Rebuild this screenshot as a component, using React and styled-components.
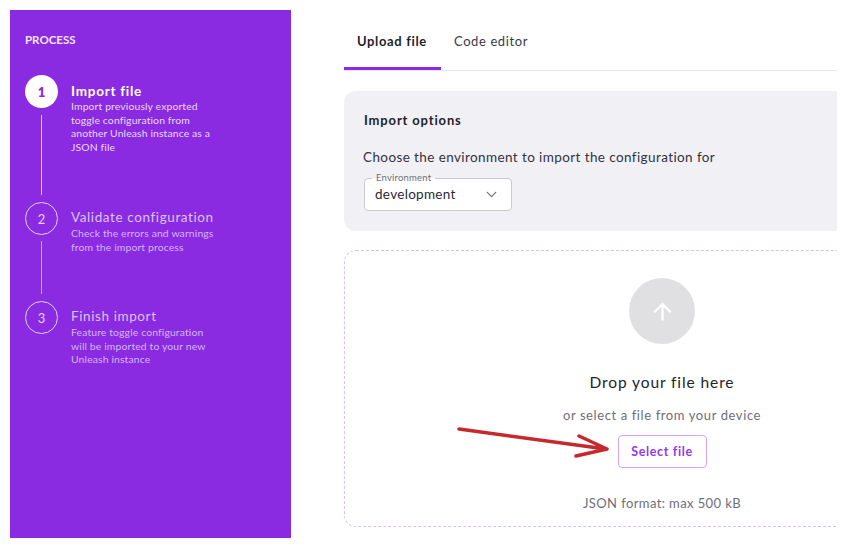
import React from 'react'
import styled, { createGlobalStyle } from 'styled-components'
import { ChevronDown } from 'lucide-react'

const steps = [
  {
    num: 1,
    title: 'Import file',
    text: ['Import previously exported', 'toggle configuration from', 'another Unleash instance as a', 'JSON file'],
    line: 80,
    height: 127,
    active: true,
  },
  {
    num: 2,
    title: 'Validate configuration',
    text: ['Check the errors and warnings', 'from the import process'],
    line: 53,
    height: 99,
  },
  {
    num: 3,
    title: 'Finish import',
    text: ['Feature toggle configuration', 'will be imported to your new', 'Unleash instance'],
  },
]

const App = () => {
  return (
    <>
      <GlobalStyle />
      <Page>
        <Sidebar>
          <SideTitle>PROCESS</SideTitle>
          <StepList>
            {steps.map((s) => (
              <Step key={s.num} $height={s.height}>
                <StepMarker>
                  <StepCircle $active={s.active}>{s.num}</StepCircle>
                  {s.line && <StepLine $height={s.line} $active={s.active} />}
                </StepMarker>
                <StepBody>
                  <StepTitle $active={s.active}>{s.title}</StepTitle>
                  <StepText $active={s.active}>
                    {s.text.map((t) => (
                      <span key={t}>{t}</span>
                    ))}
                  </StepText>
                </StepBody>
              </Step>
            ))}
          </StepList>
        </Sidebar>
        <Main>
          <Tabs>
            <Tab $active>Upload file</Tab>
            <Tab>Code editor</Tab>
          </Tabs>
          <Options>
            <OptionsTitle>Import options</OptionsTitle>
            <OptionsText>Choose the environment to import the configuration for</OptionsText>
            <SelectBox>
              <SelectLabel>Environment</SelectLabel>
              <span>development</span>
              <ChevronDown size={17} strokeWidth={1.7} color="#6e6e78" />
            </SelectBox>
          </Options>
          <DropZone>
            <UploadCircle>
              <svg width="27" height="27" viewBox="0 0 24 24" fill="#fff">
                <path d="M4 12l1.41 1.41L11 7.83V20h2V7.83l5.58 5.59L20 12l-8-8-8 8z" />
              </svg>
            </UploadCircle>
            <DropTitle>Drop your file here</DropTitle>
            <DropHint>or select a file from your device</DropHint>
            <SelectButton>Select file</SelectButton>
            <DropFormat>JSON format: max 500 kB</DropFormat>
          </DropZone>
        </Main>
        <Pointer width="160" height="40" viewBox="0 0 160 40" fill="none">
          <path
            d="M2 3 L149 23 M122 10 L150 23 L119 30"
            stroke="#c5282d"
            strokeWidth="3.5"
            strokeLinecap="round"
            strokeLinejoin="round"
          />
        </Pointer>
      </Page>
    </>
  )
}

const GlobalStyle = createGlobalStyle`
  html, body {
    margin: 0;
    padding: 0;
    background: #fff;
  }
  body {
    font-family: "Lato", "Open Sans", sans-serif;
  }
`
const Page = styled.div`
  position: relative;
  width: 847px;
  height: 548px;
  box-sizing: border-box;
  padding: 10px;
  display: flex;
  gap: 53px;
  overflow: hidden;
`
const Sidebar = styled.div`
  width: 281px;
  height: 528px;
  flex-shrink: 0;
  box-sizing: border-box;
  padding: 23px 15px;
  background: #8a2be2;
  color: #fff;
`
const SideTitle = styled.div`
  font-size: 11.5px;
  line-height: 14px;
  font-weight: 700;
  color: #f1e6fc;
  margin-bottom: 28px;
`
const StepList = styled.div`
  display: flex;
  flex-direction: column;
`
const Step = styled.div`
  display: flex;
  gap: 13px;
  height: ${(p) => (p.$height ? `${p.$height}px` : 'auto')};
`
const StepMarker = styled.div`
  width: 33px;
  flex-shrink: 0;
  display: flex;
  flex-direction: column;
  align-items: center;
`
const StepCircle = styled.div`
  width: 33px;
  height: 33px;
  box-sizing: border-box;
  border-radius: 50%;
  display: flex;
  align-items: center;
  justify-content: center;
  font-size: 13px;
  font-weight: ${(p) => (p.$active ? 800 : 400)};
  background: ${(p) => (p.$active ? '#fff' : 'transparent')};
  color: ${(p) => (p.$active ? '#8a2be2' : '#e4d0f9')};
  border: ${(p) => (p.$active ? 'none' : '1px solid #e4d0f9')};
`
const StepLine = styled.div`
  width: 1px;
  height: ${(p) => p.$height}px;
  margin-top: ${(p) => (p.$active ? 7 : 6)}px;
  background: ${(p) => (p.$active ? '#dcc3f7' : '#c9a0f2')};
`
const StepBody = styled.div`
  padding-top: 7.5px;
  min-width: 0;
`
const StepTitle = styled.div`
  font-size: 13.5px;
  line-height: 16px;
  margin: ${(p) => (p.$active ? '0' : '-1px 0 2.5px')};
  letter-spacing: ${(p) => (p.$active ? 0.75 : 0.6)}px;
  font-weight: ${(p) => (p.$active ? 700 : 400)};
  color: ${(p) => (p.$active ? '#fff' : '#dbc2f8')};
`
const StepText = styled.div`
  display: flex;
  flex-direction: column;
  margin-top: 1.5px;
  font-size: 10.4px;
  line-height: 13.7px;
  letter-spacing: 0.13px;
  color: ${(p) => (p.$active ? '#ead9fc' : '#d5b6f6')};
`
const Main = styled.div`
  width: 493px;
  height: 528px;
  flex-shrink: 0;
  overflow: hidden;
`
const Tabs = styled.div`
  display: flex;
  height: 60px;
  box-sizing: content-box;
  border-bottom: 1px solid #e6e6ec;
`
const Tab = styled.div`
  box-sizing: border-box;
  height: 60px;
  padding: 23px 13px 0;
  min-width: 97px;
  font-size: 13px;
  line-height: 16px;
  letter-spacing: ${(p) => (p.$active ? 0.65 : 0.6)}px;
  font-weight: ${(p) => (p.$active ? 700 : 400)};
  color: ${(p) => (p.$active ? '#1f1f2b' : '#3a3a46')};
  border-bottom: 3px solid ${(p) => (p.$active ? '#8a2be2' : 'transparent')};
`
const Options = styled.div`
  width: 636px;
  height: 140px;
  box-sizing: border-box;
  margin-top: 20px;
  padding: 20px 20px;
  background: #f0f0f5;
  border-radius: 12px;
`
const OptionsTitle = styled.div`
  font-size: 13px;
  line-height: 18px;
  font-weight: 700;
  letter-spacing: 0.85px;
  color: #1f1f2b;
`
const OptionsText = styled.div`
  margin-top: 19px;
  margin-left: -1px;
  font-size: 13.5px;
  line-height: 18px;
  letter-spacing: 0.4px;
  color: #33333f;
`
const SelectBox = styled.div`
  position: relative;
  width: 148px;
  height: 33px;
  box-sizing: border-box;
  margin-top: 12px;
  padding: 0 11px 1px 10px;
  display: flex;
  align-items: center;
  justify-content: space-between;
  background: #fff;
  border: 1px solid #c9c9ce;
  border-radius: 4px;
  font-size: 13.5px;
  letter-spacing: 0.3px;
  color: #2a2a36;
`
const SelectLabel = styled.label`
  position: absolute;
  top: -7px;
  left: 7px;
  padding: 0 4px;
  font-size: 9.5px;
  line-height: 12px;
  letter-spacing: 0.2px;
  color: #6e6e78;
  background: linear-gradient(#f0f0f5 50%, #fff 50%);
`
const DropZone = styled.div`
  width: 636px;
  height: 277px;
  box-sizing: border-box;
  margin-top: 19px;
  padding-top: 27px;
  display: flex;
  flex-direction: column;
  align-items: center;
  border: 1px dashed #d5c2f3;
  border-radius: 12px;
`
const UploadCircle = styled.div`
  width: 66px;
  height: 66px;
  border-radius: 50%;
  background: #e0e0e3;
  display: flex;
  align-items: center;
  justify-content: center;
`
const DropTitle = styled.div`
  margin-top: 28px;
  font-size: 15.5px;
  line-height: 20px;
  letter-spacing: 0.9px;
  color: #22222e;
`
const DropHint = styled.div`
  margin-top: 15px;
  font-size: 13px;
  line-height: 16px;
  letter-spacing: 0.6px;
  color: #6e6e78;
`
const SelectButton = styled.button`
  margin-top: 12px;
  width: 89px;
  height: 33px;
  padding: 0;
  background: #fff;
  border: 1px solid #cfa6f6;
  border-radius: 4px;
  font-family: inherit;
  font-size: 12.5px;
  font-weight: 700;
  letter-spacing: 0.65px;
  color: #9437ee;
`
const DropFormat = styled.div`
  margin-top: 27px;
  font-size: 13px;
  line-height: 16px;
  letter-spacing: 0.4px;
  color: #6e6e78;
`
const Pointer = styled.svg`
  position: absolute;
  left: 457px;
  top: 426px;
`

export default App
